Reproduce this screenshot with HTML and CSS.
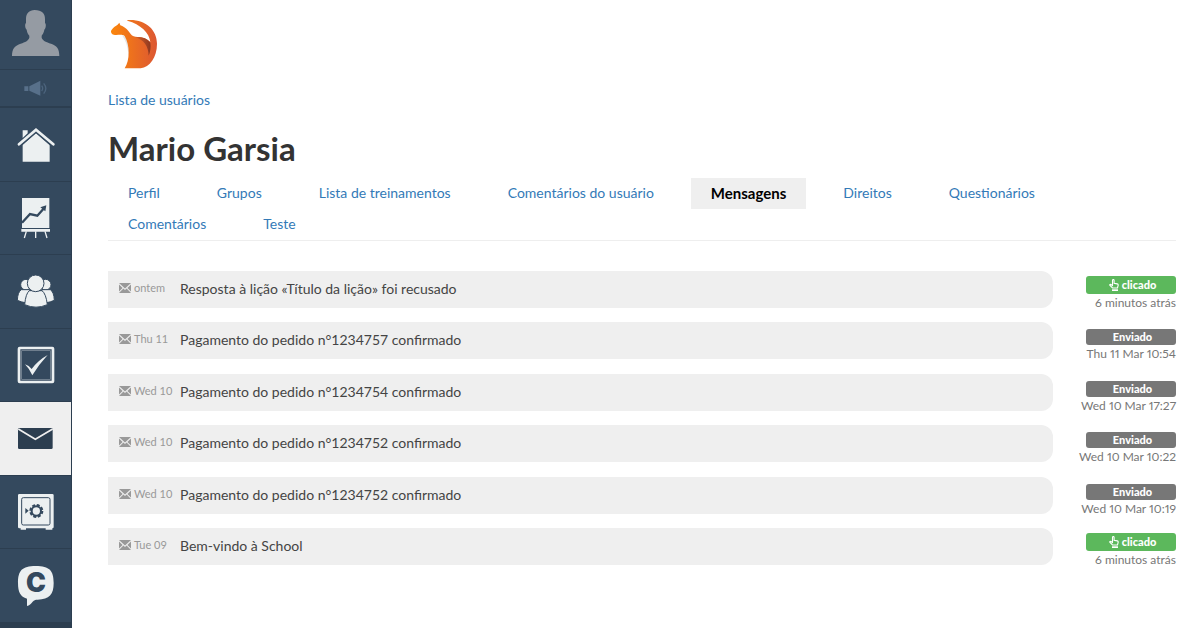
FILE: index.html
```
<!DOCTYPE html>
<html lang="pt">
<head>
    <meta charset="UTF-8">
    <meta name="viewport" content="width=device-width, initial-scale=1.0">
    <title>Mario Garsia</title>
    <link rel="stylesheet" href="styles.css">
</head>
<body>
    <svg class="sprite" aria-hidden="true">
        <symbol id="envelope" viewBox="0 0 12 10">
            <path d="M0 0h12L6 5.500z M0 1.500l3.600 3.500L0 8.500z M12 1.500v7L8.400 5z M4.400 5.600L6 7l1.600-1.400L12 10H0z"/>
        </symbol>
        <symbol id="hand" viewBox="0 0 10 12">
            <path d="M3.500 6.500V1.500q0-1 .8-1t.8 1v2.700l3.200.7q1 .3.900 1.300L8.500 9h-5L.8 6.200q-.3-1 .7-1z" fill="none" stroke="#fff" stroke-width="1.100"/>
            <path d="M3 10.300h6V12H3z" fill="#fff"/>
        </symbol>
    </svg>

    <aside class="sidebar">
        <a href="#" class="avatar" aria-label="Conta">
            <svg width="48" height="46" viewBox="36 30 144 138">
                <path fill="#959ba3" d="M104 30c22 0 31 11 31 27v12c4 2 3 16-2 20-1 9-6 14-8 18v6c4 10 14 13 28 18 17 6 25 14 25 37H36c0-23 9-31 26-37 14-5 22-8 26-18v-6c-3-4-7-9-8-18-5-4-6-18-2-20V57c0-16 9-27 26-27z"/>
            </svg>
        </a>
        <a href="#" class="news" aria-label="Novidades">
            <svg width="24" height="17" viewBox="70 240 72 51">
                <path fill="#58708a" d="M71 259h12v14H71zM86 259l33-17v45l-33-15z"/>
                <path fill="none" stroke="#4c647d" stroke-width="4" d="M123 257q6 8 0 16M129 250q13 15 0 31"/>
            </svg>
        </a>
        <nav class="menu">
            <a href="#" aria-label="Início">
                <svg width="38" height="35" viewBox="51 57 114 105">
                    <path fill="#ecf0f1" d="M68 67h15v9L68 90zM68 110l40-35 41 35v51H68z"/>
                    <path fill="none" stroke="#34495e" stroke-width="14" d="M56 112l52-45 52 45"/>
                    <path fill="none" stroke="#ecf0f1" stroke-width="8" stroke-linecap="round" d="M57 109l51-44 52 44"/>
                </svg>
            </a>
            <a href="#" aria-label="Estatísticas">
                <svg width="30" height="42" viewBox="63 267 90 126">
                    <path fill="#ecf0f1" d="M66 270h82v90H66zM64 363h86v8H64z"/>
                    <path fill="none" stroke="#ecf0f1" stroke-width="4" d="M79 370l-6 20M107 370v20M135 370l6 20"/>
                    <path fill="none" stroke="#34495e" stroke-width="7" d="M66 344l24-26 22 5 20-22"/>
                    <path fill="#34495e" d="M139 292l-3 18-15-12z"/>
                </svg>
            </a>
            <a href="#" aria-label="Usuários">
                <svg width="38" height="33" viewBox="51 57 114 99">
                    <g fill="#ecf0f1" stroke="#34495e" stroke-width="3">
                        <circle cx="78" cy="86" r="16"/>
                        <circle cx="137" cy="86" r="16"/>
                        <path d="M64 101h26l-10 40q-18-3-28-8 1-25 12-32zM151 101h-26l10 40q18-3 28-8-1-25-12-32z"/>
                        <path d="M88 104h38q12 9 16 42-34 15-68 0 3-33 14-42z"/>
                        <circle cx="107" cy="82" r="25"/>
                    </g>
                </svg>
            </a>
            <a href="#" aria-label="Tarefas">
                <svg width="38" height="38" viewBox="51 270 114 114">
                    <rect x="57" y="276" width="102" height="102" rx="2" fill="none" stroke="#ecf0f1" stroke-width="8"/>
                    <rect x="65" y="284" width="86" height="86" fill="none" stroke="#8c99a5" stroke-width="2"/>
                    <path fill="#ecf0f1" d="M75 325q12 4 20 14 19-26 48-42-27 29-46 61-8-19-22-33z"/>
                </svg>
            </a>
            <a href="#" class="current" aria-label="Mensagens">
                <svg width="38" height="23" viewBox="51 84 114 69">
                    <rect x="54" y="87" width="104" height="63" rx="4" fill="#2c3e50"/>
                    <path fill="none" stroke="#efefef" stroke-width="5" d="M55 90l51 31 52-31"/>
                </svg>
            </a>
            <a href="#" aria-label="Pagamentos">
                <svg width="38" height="38" viewBox="51 279 114 114">
                    <path fill="#ecf0f1" d="M58 282h99q4 0 4 4v95q0 4-4 4v4h-20v-4H78v4H62v-4h-4q-4 0-4-4v-95q0-4 4-4z"/>
                    <rect x="65" y="293" width="85" height="82" rx="5" fill="none" stroke="#34495e" stroke-width="3"/>
                    <circle cx="109" cy="333" r="14" fill="none" stroke="#34495e" stroke-width="6"/>
                    <circle cx="109" cy="333" r="18" fill="none" stroke="#34495e" stroke-width="6" stroke-dasharray="9 5"/>
                    <path fill="#34495e" d="M76 324l10 8-10 9z"/>
                </svg>
            </a>
            <a href="#" aria-label="Chat">
                <svg width="38" height="42" viewBox="51 495 114 126">
                    <path fill="#ecf0f1" d="M107 498c42 0 54 14 54 51 0 35-13 49-48 50-8 0-10 1-15 6-5 6-10 11-17 13v-22c-20-6-27-19-27-47 0-37 12-51 53-51z"/>
                    <text x="108" y="577" class="chat-mark">C</text>
                </svg>
            </a>
        </nav>
    </aside>

    <main class="content">
        <a href="#" class="logo" aria-label="Página inicial">
            <svg width="52" height="52" viewBox="24 24 156 156">
                <defs>
                    <linearGradient id="fur" x1="0" x2="1">
                        <stop offset="0" stop-color="#fb860c"/>
                        <stop offset="1" stop-color="#dc5733"/>
                    </linearGradient>
                    <linearGradient id="shade" x1="0" x2="1">
                        <stop offset="0" stop-color="#d8622a"/>
                        <stop offset="1" stop-color="#8d3820"/>
                    </linearGradient>
                </defs>
                <path fill="#e3e5e6" d="M66 76q16 20 20 62 8-30-4-56z"/>
                <path fill="url(#fur)" d="M82 30c52-4 89 27 89 71 0 42-22 70-49 74H74c16-24 16-70 0-97-9-6-19-2-29-3-10 0-14-8-11-14 6-8 11-13 18-16l6-7 3 8c16 5 24 17 31 26 5 7 12 8 21 9 16 1 28 5 38 15C148 68 122 43 82 32z"/>
                <path fill="url(#shade)" d="M105 81c23-1 36 4 46 17 2 13 0 27-5 39 0-28-15-48-41-56z"/>
            </svg>
        </a>
        <div class="back"><a href="#">Lista de usuários</a></div>
        <h1>Mario Garsia</h1>

        <nav class="tabs">
            <a href="#">Perfil</a>
            <a href="#">Grupos</a>
            <a href="#">Lista de treinamentos</a>
            <a href="#">Comentários do usuário</a>
            <a href="#" class="active">Mensagens</a>
            <a href="#">Direitos</a>
            <a href="#">Questionários</a>
            <a href="#">Comentários</a>
            <a href="#">Teste</a>
        </nav>

        <ul class="messages">
            <li>
                <a href="#" class="message"><span class="day"><svg class="envelope"><use href="#envelope"/></svg>ontem</span>Resposta à lição «Título da lição» foi recusado</a>
                <div class="status">
                    <span class="label clicked"><svg class="hand"><use href="#hand"/></svg>clicado</span>
                    <span class="time">6 minutos atrás</span>
                </div>
            </li>
            <li>
                <a href="#" class="message"><span class="day"><svg class="envelope"><use href="#envelope"/></svg>Thu 11</span>Pagamento do pedido n°1234757 confirmado</a>
                <div class="status">
                    <span class="label">Enviado</span>
                    <span class="time">Thu 11 Mar 10:54</span>
                </div>
            </li>
            <li>
                <a href="#" class="message"><span class="day"><svg class="envelope"><use href="#envelope"/></svg>Wed 10</span>Pagamento do pedido n°1234754 confirmado</a>
                <div class="status">
                    <span class="label">Enviado</span>
                    <span class="time">Wed 10 Mar 17:27</span>
                </div>
            </li>
            <li>
                <a href="#" class="message"><span class="day"><svg class="envelope"><use href="#envelope"/></svg>Wed 10</span>Pagamento do pedido n°1234752 confirmado</a>
                <div class="status">
                    <span class="label">Enviado</span>
                    <span class="time">Wed 10 Mar 10:22</span>
                </div>
            </li>
            <li>
                <a href="#" class="message"><span class="day"><svg class="envelope"><use href="#envelope"/></svg>Wed 10</span>Pagamento do pedido n°1234752 confirmado</a>
                <div class="status">
                    <span class="label">Enviado</span>
                    <span class="time">Wed 10 Mar 10:19</span>
                </div>
            </li>
            <li>
                <a href="#" class="message"><span class="day"><svg class="envelope"><use href="#envelope"/></svg>Tue 09</span>Bem-vindo à School</a>
                <div class="status">
                    <span class="label clicked"><svg class="hand"><use href="#hand"/></svg>clicado</span>
                    <span class="time">6 minutos atrás</span>
                </div>
            </li>
        </ul>
    </main>
</body>
</html>
```

FILE: styles.css
```
* { box-sizing: border-box; }
body { margin: 0; display: flex; min-height: 100vh; font-family: Lato, "Liberation Sans", sans-serif; font-size: 14px; line-height: 20px; color: #333; background-color: #fff; }
a { color: #337ab7; text-decoration: none; }
.sprite { position: absolute; width: 0; height: 0; }

/* sidebar */
.sidebar { flex: 0 0 72px; background-color: #2c3e50; border-right: 1px solid #2c3e50; }
.sidebar a { display: flex; align-items: center; justify-content: center; background-color: #34495e; border-bottom: 1px solid #2c3e50; }
.sidebar .avatar { height: 70px; padding-bottom: 3px; }
.sidebar .news { height: 38px; border-bottom-width: 2px; }
.menu a { height: 73px; }
.menu a:nth-child(odd) { height: 74px; }
.menu .current { background-color: #efefef; }
.chat-mark { font-family: Inter, sans-serif; font-size: 80px; font-weight: 900; text-anchor: middle; fill: #34495e; }

/* content */
.content { flex: 1; min-width: 0; padding: 18px 24px 40px 36px; }
.logo { display: inline-block; vertical-align: top; }
.logo svg { display: block; }
.back { margin-top: 20px; }
h1 { margin: 20px 0 12px; font-size: 33px; line-height: 36px; font-weight: bold; }

.tabs { display: flex; flex-wrap: wrap; column-gap: 17px; border-bottom: 1px solid #eee; }
.tabs a { padding: 5px 20px 6px; }
.tabs .active { background-color: #efefef; color: #000; font-size: 15px; font-weight: bold; }

/* messages */
.messages { list-style: none; margin: 30px 0 0; padding: 0; }
.messages li { display: flex; align-items: flex-start; gap: 33px; margin-bottom: 11px; }
.messages li:nth-child(even) { margin-bottom: 12px; }
.message { flex: 1; display: flex; align-items: center; height: 37px; padding: 0 11px 2px; background-color: #efefef; border-radius: 0 12px 12px 0; color: #444; }
.day { flex: 0 0 61px; display: flex; align-items: center; gap: 3px; padding-bottom: 2px; font-size: 11px; color: #999; white-space: nowrap; }
.envelope { width: 12px; height: 10px; fill: #999; }
.status { flex: 0 0 90px; min-width: 0; height: 40px; display: flex; flex-direction: column; justify-content: flex-end; align-items: flex-end; gap: 1px; }
.label { display: flex; align-items: center; justify-content: center; gap: 3px; width: 100%; height: 16px; padding: 0 0 1px 3px; border-radius: 3px; background-color: #777; color: #fff; font-size: 11px; line-height: 16px; font-weight: 900; }
.clicked { height: 18px; background-color: #5cb85c; }
.hand { width: 10px; height: 12px; }
.time { font-size: 12px; line-height: 16px; font-variant-numeric: proportional-nums; color: #777; white-space: nowrap; }
```
